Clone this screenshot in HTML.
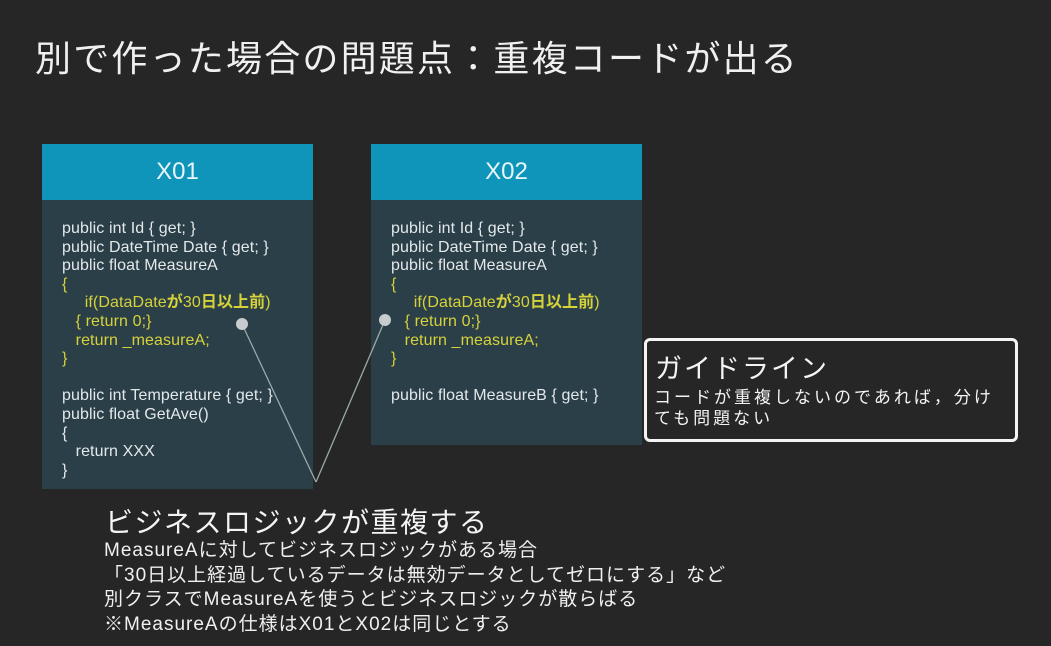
<!DOCTYPE html>
<html><head><meta charset="utf-8"><style>
body{margin:0;width:1051px;height:646px;background:#262626;overflow:hidden;position:relative;font-family:"Liberation Sans","Noto Sans CJK JP",sans-serif;color:#eee}
.a{position:absolute;white-space:nowrap}
.h{position:absolute;background:#0f95ba;color:#e8f6fa;font-size:24px;text-align:center;line-height:56px}
.b{position:absolute;background:#2b3f48}
.code{position:absolute;font-size:16px;line-height:18.6px;color:#e4e8ea;letter-spacing:0.1px}
.y{color:#d6d23a}
</style></head><body>
<div class="a" style="left:35px;top:30px;font-size:36px;letter-spacing:2.2px;color:#f0f0f0">別で作った場合の問題点：重複コードが出る</div>

<div class="h" style="left:42px;top:144px;width:271px;height:56px">X01</div>
<div class="b" style="left:42px;top:200px;width:271px;height:289px"></div>
<div class="code" style="left:62px;top:220px">public int Id { get; }<br>public DateTime Date { get; }<br>public float MeasureA<br><span class="y">{<br>&nbsp;&nbsp;&nbsp;&nbsp;&nbsp;if(DataDate<b>が</b>30<b>日以上前</b>)<br>&nbsp;&nbsp;&nbsp;{ return 0;}<br>&nbsp;&nbsp;&nbsp;return _measureA;<br>}</span><br><br>public int Temperature { get; }<br>public float GetAve()<br>{<br>&nbsp;&nbsp;&nbsp;return XXX<br>}</div>

<div class="h" style="left:371px;top:144px;width:271px;height:56px">X02</div>
<div class="b" style="left:371px;top:200px;width:271px;height:245px"></div>
<div class="code" style="left:391px;top:220px">public int Id { get; }<br>public DateTime Date { get; }<br>public float MeasureA<br><span class="y">{<br>&nbsp;&nbsp;&nbsp;&nbsp;&nbsp;if(DataDate<b>が</b>30<b>日以上前</b>)<br>&nbsp;&nbsp;&nbsp;{ return 0;}<br>&nbsp;&nbsp;&nbsp;return _measureA;<br>}</span><br><br>public float MeasureB { get; }</div>

<svg style="position:absolute;left:0;top:0" width="1051" height="646">
<line x1="242" y1="324" x2="316" y2="482" stroke="#9aa" stroke-width="1.3"/>
<line x1="385" y1="320" x2="316" y2="482" stroke="#9aa" stroke-width="1.3"/>
<circle cx="242" cy="324" r="6" fill="#c8ccce"/>
<circle cx="385" cy="320" r="6" fill="#c8ccce"/>
</svg>

<div class="a" style="left:644px;top:338px;width:368px;height:98px;border:3px solid #f4f4f4;border-radius:6px;background:#262626"></div>
<div class="a" style="left:655px;top:347px;font-size:27px;letter-spacing:2px;color:#f4f4f4">ガイドライン</div>
<div class="a" style="left:654px;top:387px;font-size:17px;letter-spacing:3px;line-height:21px;color:#f4f4f4">コードが重複しないのであれば，分け<br>ても問題ない</div>

<div class="a" style="left:105px;top:501px;font-size:28px;letter-spacing:1.5px;color:#f4f4f4">ビジネスロジックが重複する</div>
<div class="a" style="left:104px;top:539px;font-size:19px;letter-spacing:1px;line-height:24.5px;color:#f0f0f0">MeasureAに対してビジネスロジックがある場合<br>「30日以上経過しているデータは無効データとしてゼロにする」など<br>別クラスでMeasureAを使うとビジネスロジックが散らばる<br>※MeasureAの仕様はX01とX02は同じとする</div>
</body></html>
